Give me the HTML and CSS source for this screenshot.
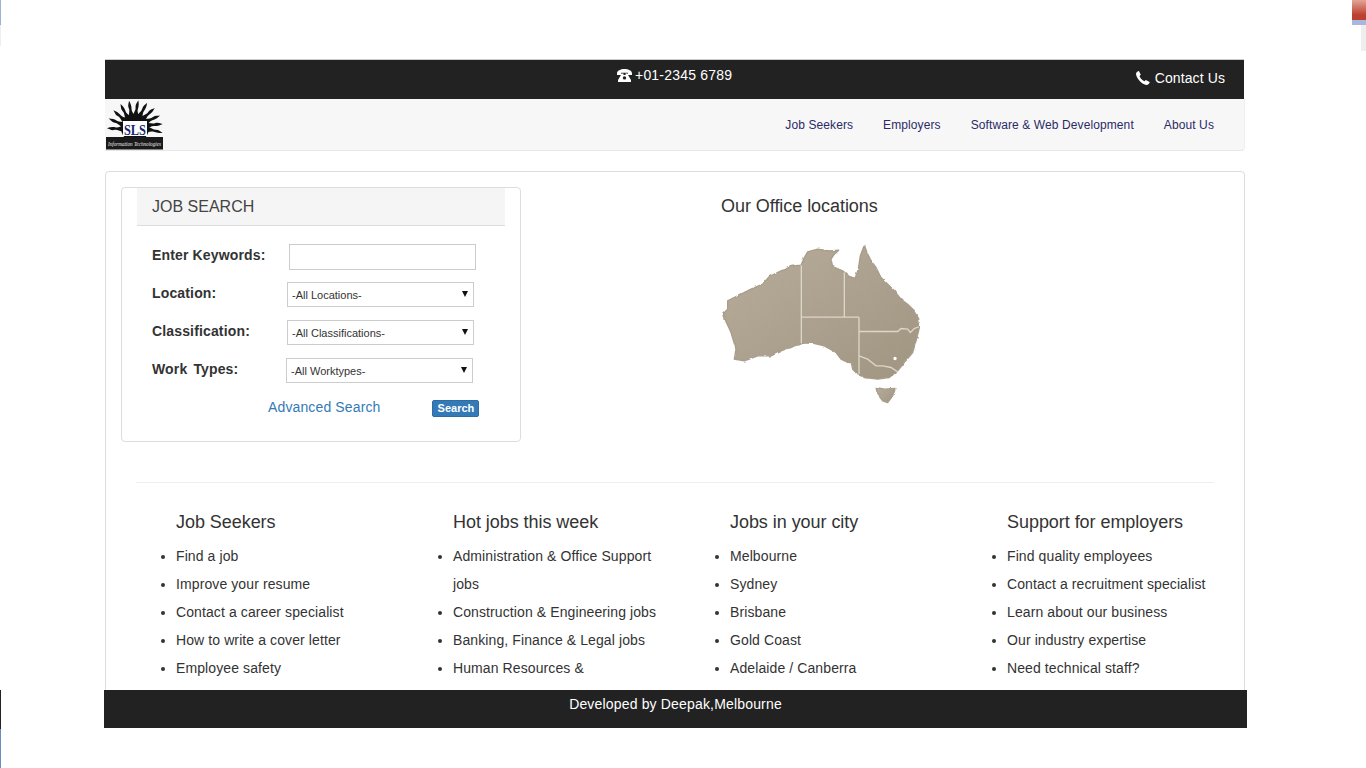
FILE: index.html
```html
<!DOCTYPE html>
<html lang="en">
<head>
<meta charset="utf-8">
<title>SLS Information Technologies</title>
<link rel="stylesheet" href="styles.css">
</head>
<body>
<div class="artifact art-tl"></div>
<div class="artifact art-tl2"></div>
<div class="artifact art-tr"></div>
<div class="artifact art-tr2"></div>
<div class="artifact art-bl"></div>
<div class="artifact art-bl2"></div>

<div class="page">
  <header class="topbar">
    <span class="top-phone">
      <svg class="ico-alt" viewBox="0 0 15 13"><path fill="#fff" fill-rule="evenodd" d="M0 4.600C0 1.600 3.600 0 7.500 0S15 1.600 15 4.600V6h-4.200V3.700H4.200V6H0zM4.800 4.600h1.700V6h2V4.600h1.700L14 11v2H1v-2zM7.500 7.200a1.700 1.700 0 1 0 0 3.400 1.700 1.700 0 0 0 0-3.400z"/></svg>
      +01-2345 6789
    </span>
    <span class="top-contact">
      <svg class="ico-phone" viewBox="0 0 14 14"><path fill="#fff" d="M2.900.1 4.800 3.700 3.500 5c.5 1.900 2.700 4.300 4.900 5.300l1.400-1.300 3.900 2.100c.2 1-1.600 2.800-3.200 2.900C6 13.600.4 7.600 0 3.100-.1 1.700 1.700.1 2.900.1z"/></svg>
      Contact Us
    </span>
  </header>

  <nav class="navbar">
    <svg class="logo" viewBox="0 0 57 50">
      <defs>
        <path id="ray" d="M-2.200-11C-4-15-.3-17-1.300-21-1.800-24 .3-26 .8-28 1.800-25 2-22 1.200-19 .5-16 3-14 2.200-11z"/>
      </defs>
      <g transform="translate(29 28)" fill="#111">
        <circle r="14"/>
        <use href="#ray" transform="rotate(-92)"/>
        <use href="#ray" transform="rotate(-72)"/>
        <use href="#ray" transform="rotate(-52)"/>
        <use href="#ray" transform="rotate(-33)"/>
        <use href="#ray" transform="rotate(-14)"/>
        <use href="#ray" transform="rotate(5)"/>
        <use href="#ray" transform="rotate(24)"/>
        <use href="#ray" transform="rotate(43)"/>
        <use href="#ray" transform="rotate(62)"/>
        <use href="#ray" transform="rotate(80)"/>
        <use href="#ray" transform="rotate(98)"/>
      </g>
      <rect x="17" y="21" width="24" height="15" fill="#fff"/>
      <text class="logo-sls" x="18" y="34.500" textLength="22" lengthAdjust="spacingAndGlyphs">SLS</text>
      <rect x="0" y="37" width="57" height="12.500" fill="#1a1a1a"/>
      <text class="logo-sub" x="2" y="46" textLength="53" lengthAdjust="spacingAndGlyphs">Information Technologies</text>
    </svg>
    <ul class="nav-links">
      <li><a href="#">Job Seekers</a></li>
      <li><a href="#">Employers</a></li>
      <li><a href="#">Software &amp; Web Development</a></li>
      <li><a href="#">About Us</a></li>
    </ul>
  </nav>

  <main class="panel">
    <div class="upper">
      <section class="search-box">
        <h3 class="search-title">JOB SEARCH</h3>
        <form class="search-form">
          <div class="row row-kw">
            <label class="lbl" for="kw">Enter Keywords:</label>
            <input class="field" id="kw" type="text">
          </div>
          <div class="row row-sel">
            <label class="lbl" for="loc">Location:</label>
            <span class="sel-wrap"><select class="sel" id="loc"><option>-All Locations-</option></select></span>
          </div>
          <div class="row row-sel">
            <label class="lbl" for="cls">Classification:</label>
            <span class="sel-wrap"><select class="sel" id="cls"><option>-All Classifications-</option></select></span>
          </div>
          <div class="row row-wt">
            <label class="lbl" for="wt">Work Types:</label>
            <span class="sel-wrap"><select class="sel" id="wt"><option>-All Worktypes-</option></select></span>
          </div>
          <div class="actions">
            <a class="adv" href="#">Advanced Search</a>
            <button class="btn" type="button">Search</button>
          </div>
        </form>
      </section>

      <section class="offices">
        <h4 class="office-title">Our Office locations</h4>
        <svg class="map" viewBox="60 150 600 500">
          <defs>
            <linearGradient id="land" x1="0" y1="0" x2="1" y2="1">
              <stop offset="0" stop-color="#b8ad9b"/>
              <stop offset="1" stop-color="#a09581"/>
            </linearGradient>
            <filter id="rough" x="-5%" y="-5%" width="110%" height="110%">
              <feTurbulence type="fractalNoise" baseFrequency="0.05" numOctaves="2" seed="4" result="n"/>
              <feDisplacementMap in="SourceGraphic" in2="n" scale="9" xChannelSelector="R" yChannelSelector="G"/>
              <feGaussianBlur stdDeviation="1.500"/>
            </filter>
          </defs>
          <g fill="url(#land)" stroke="#a89d8a" stroke-width="4" stroke-linejoin="round" filter="url(#rough)">
            <path d="M300 228 310 205 320 188 350 180 385 185 413 183 400 195 390 210 395 232 425 245 445 262 462 268 472 240 478 200 490 168 498 190 510 215 525 235 540 265 555 280 580 305 600 330 620 345 640 365 653 385 655 415 648 445 635 490 610 520 590 545 565 565 530 570 490 565 470 555 455 540 450 515 440 520 420 510 405 490 370 470 335 462 310 462 280 470 240 485 210 500 170 500 130 515 100 510 105 480 90 430 72 390 68 372 80 360 80 335 110 320 150 300 185 285 205 262 240 245 270 232z"/>
            <path d="M525 595 550 600 582 598 575 620 560 640 545 635 530 615z"/>
          </g>
          <g fill="none" stroke="#dcd6ca" stroke-width="4">
            <path d="M301 228V462M301 384H474M430 250V384M474 384V555"/>
            <path d="M474 427H590L600 418 620 420 628 430 640 418 653 413"/>
            <path d="M474 500 500 510 525 530 545 530 570 535 590 548"/>
          </g>
          <circle cx="582" cy="508" r="5" fill="#fff"/>
        </svg>
      </section>
    </div>

    <hr class="divider">

    <div class="columns">
      <section class="col">
        <h4 class="col-title">Job Seekers</h4>
        <ul class="col-list">
          <li>Find a job</li>
          <li>Improve your resume</li>
          <li>Contact a career specialist</li>
          <li>How to write a cover letter</li>
          <li>Employee safety</li>
        </ul>
      </section>
      <section class="col">
        <h4 class="col-title">Hot jobs this week</h4>
        <ul class="col-list">
          <li>Administration &amp; Office Support jobs</li>
          <li>Construction &amp; Engineering jobs</li>
          <li>Banking, Finance &amp; Legal jobs</li>
          <li>Human Resources &amp;</li>
        </ul>
      </section>
      <section class="col">
        <h4 class="col-title">Jobs in your city</h4>
        <ul class="col-list">
          <li>Melbourne</li>
          <li>Sydney</li>
          <li>Brisbane</li>
          <li>Gold Coast</li>
          <li>Adelaide / Canberra</li>
        </ul>
      </section>
      <section class="col">
        <h4 class="col-title">Support for employers</h4>
        <ul class="col-list">
          <li>Find quality employees</li>
          <li>Contact a recruitment specialist</li>
          <li>Learn about our business</li>
          <li>Our industry expertise</li>
          <li>Need technical staff?</li>
        </ul>
      </section>
    </div>
  </main>
</div>

<footer class="footer">Developed by Deepak,Melbourne</footer>
</body>
</html>
```

FILE: styles.css
```css
* { box-sizing: border-box; }

html, body {
  margin: 0;
  height: 768px;
  overflow: hidden;
  background: #fff;
}

body {
  position: relative;
  font-family: "Liberation Sans", Arial, sans-serif;
  font-size: 14px;
  color: #333;
}

.page {
  width: 1140px;
  margin-left: 105px;
  padding-top: 59px;
}

/* Top bar */
.topbar {
  height: 40px;
  margin-right: 1px;
  background: #222;
  border-top: 1px solid #ccc;
  color: #fff;
  display: flex;
  align-items: flex-start;
  font-size: 14px;
}

.top-phone {
  margin-left: 512px;
  margin-top: 7px;
  display: flex;
  align-items: center;
  gap: 3px;
  line-height: 17px;
  letter-spacing: .2px;
}

.top-contact {
  margin-left: auto;
  margin-right: 19px;
  margin-top: 10px;
  display: flex;
  align-items: center;
  gap: 5px;
  line-height: 17px;
  letter-spacing: .1px;
}

.ico-alt { width: 15px; height: 13px; margin-top: -1px; }
.ico-phone { width: 14px; height: 14px; margin-top: -2px; }

/* Navbar */
.navbar {
  height: 52px;
  background: #f8f7f8;
  border-bottom: 1px solid #e7e7e7;
  border-right: 1px solid #eee;
  border-radius: 0 0 4px 0;
  display: flex;
  justify-content: space-between;
  align-items: flex-start;
}

.logo { width: 57px; height: 50px; margin: 1px 0 0 1px; }
.logo-sls { font: bold 14.500px "Liberation Serif", serif; fill: #14286e; }
.logo-sub { font: italic 5.500px "Liberation Serif", serif; fill: #eee; }

.nav-links {
  display: flex;
  gap: 30px;
  list-style: none;
  margin: 19px 30px 0 0;
  padding: 0;
}

.nav-links a {
  color: #2a2a66;
  font-size: 12px;
  line-height: 15px;
  text-decoration: none;
  display: block;
  letter-spacing: .1px;
}

/* Panel */
.panel {
  height: 530px;
  margin-top: 20px;
  border: 1px solid #ddd;
  border-radius: 4px;
  background: #fff;
}

.upper {
  display: flex;
  padding: 15px 0 0 15px;
}

.search-box {
  width: 400px;
  height: 255px;
  border: 1px solid #ddd;
  border-radius: 4px;
  padding: 0 15px;
  flex: none;
}

.search-title {
  margin: 0;
  height: 38px;
  padding: 0 15px;
  background: #f5f5f5;
  border-bottom: 1px solid #ddd;
  font-size: 16px;
  font-weight: 400;
  line-height: 37px;
  color: #444;
}

.search-form { padding: 18px 0 0 15px; }

.row {
  display: flex;
  align-items: flex-start;
  height: 38px;
}

.lbl {
  font-weight: 700;
  letter-spacing: .15px;
  line-height: 20px;
  flex: none;
  margin-top: 1px;
}

.row-kw .lbl { width: 137px; }
.row-sel .lbl { width: 135px; }
.row-wt .lbl { width: 134px; word-spacing: 2px; }

.field {
  width: 187px;
  height: 26px;
  border: 1px solid #ccc;
  background: #fff;
  padding: 0 4px;
}

.sel-wrap {
  position: relative;
  display: block;
  width: 187px;
  height: 25px;
}

.sel-wrap::after {
  content: "";
  position: absolute;
  right: 6.500px;
  top: 9px;
  border-left: 3.500px solid transparent;
  border-right: 3.500px solid transparent;
  border-top: 6px solid #111;
  pointer-events: none;
}

.sel {
  appearance: none;
  -webkit-appearance: none;
  display: block;
  width: 100%;
  height: 25px;
  border: 1px solid #ccc;
  border-radius: 0;
  background: #fff;
  font-family: "Liberation Sans", Arial, sans-serif;
  font-size: 11px;
  color: #333;
  padding: 0 4px;
}

.actions {
  display: flex;
  align-items: flex-start;
  padding-left: 116px;
  padding-top: 3px;
}

.adv {
  color: #337ab7;
  text-decoration: none;
  letter-spacing: .13px;
  line-height: 17px;
}

.btn {
  margin-left: 52px;
  width: 47px;
  height: 17px;
  margin-top: 1px;
  padding: 0;
  border: 1px solid #2e6da4;
  border-radius: 2px;
  background: #337ab7;
  color: #fff;
  font: 700 11px "Liberation Sans", Arial, sans-serif;
  line-height: 15px;
}

/* Offices */
.offices { margin-left: 200px; }

.office-title {
  margin: 9px 0 0;
  font-size: 18px;
  font-weight: 400;
  letter-spacing: -.05px;
  line-height: 20px;
  color: #333;
}

.map {
  display: block;
  width: 200px;
  height: 167px;
  margin-top: 23px;
}

/* Divider and columns */
.divider {
  margin: 40px 30px 0;
  border: 0;
  border-top: 1px solid #eee;
}

.columns {
  display: grid;
  grid-template-columns: repeat(4, 277px);
  margin: 29px 0 0 30px;
}

.col-title {
  margin: 0 0 10px 40px;
  font-size: 18px;
  font-weight: 400;
  letter-spacing: -.05px;
  line-height: 20px;
  color: #333;
}

.col-list {
  margin: 0;
  padding: 0 0 0 40px;
  width: 255px;
  line-height: 28px;
  letter-spacing: .1px;
}

/* Footer */
.footer {
  position: absolute;
  left: 104px;
  top: 690px;
  width: 1143px;
  height: 38px;
  background: #222;
  color: #fff;
  text-align: center;
  line-height: 29px;
  letter-spacing: .17px;
}

/* Stray screen fragments at the window edges */
.artifact { position: absolute; }
.art-tl { left: 0; top: 0; width: 1px; height: 25px; background: #9fb0dc; }
.art-tl2 { left: 0; top: 25px; width: 1px; height: 21px; background: #eee; }
.art-tr { left: 1352px; top: 0; width: 14px; height: 25px; background: linear-gradient(#e3a596, #bb4030 60%, #bb4030 80%, #a9b7de 80%); }
.art-tr2 { left: 1361px; top: 25px; width: 5px; height: 26px; background: #eee; }
.art-bl { left: 0; top: 690px; width: 1px; height: 39px; background: #222; }
.art-bl2 { left: 0; top: 729px; width: 1px; height: 39px; background: #6a8cc4; }
```
